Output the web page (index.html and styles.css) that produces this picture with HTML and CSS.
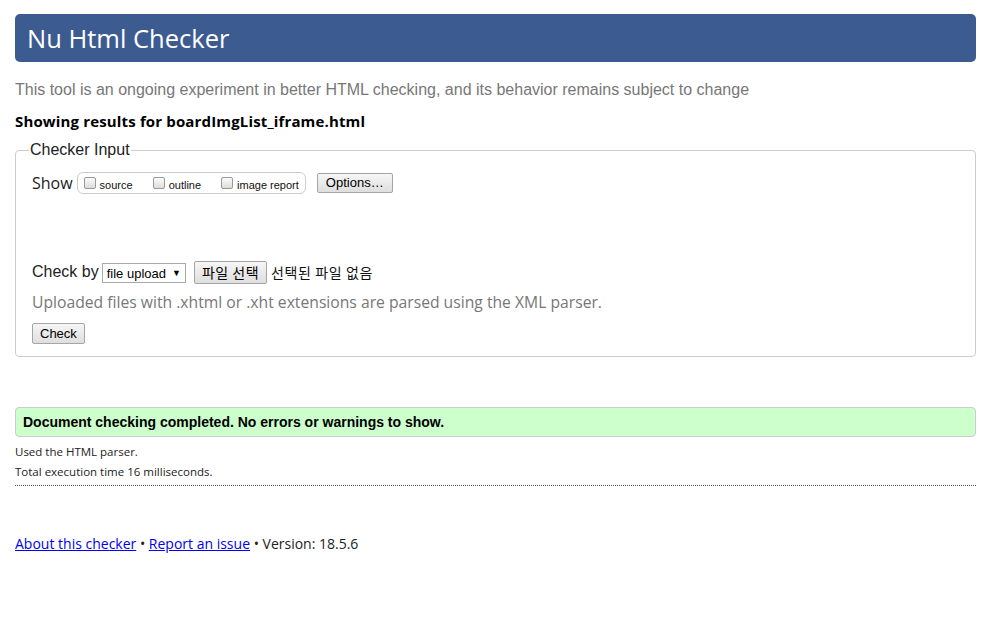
FILE: index.html
```html
<!DOCTYPE html>
<html lang="en">
<head>
<meta charset="utf-8">
<title>Nu Html Checker</title>
<link rel="stylesheet" href="styles.css">
</head>
<body>
<header class="banner"><h1 class="title">Nu Html Checker</h1></header>
<p class="tagline">This tool is an ongoing experiment in better HTML checking, and its behavior remains subject to change</p>
<p class="showing">Showing results for boardImgList_iframe.html</p>
<fieldset class="input">
  <legend class="legend">Checker Input</legend>
  <div class="row show-row">
    <span class="show-label">Show</span>
    <span class="show-group">
      <label class="opt"><input type="checkbox" class="cb"><span>source</span></label>
      <label class="opt"><input type="checkbox" class="cb"><span>outline</span></label>
      <label class="opt"><input type="checkbox" class="cb"><span>image report</span></label>
    </span>
    <button class="btn options">Options…</button>
  </div>
  <div class="row check-row">
    <span class="checkby">Check by</span>
    <span class="select">file upload <span class="arrow">▼</span></span>
    <button class="btn file">파일 선택</button>
    <span class="nofile">선택된 파일 없음</span>
  </div>
  <p class="info">Uploaded files with .xhtml or .xht extensions are parsed using the XML parser.</p>
  <button class="btn check">Check</button>
</fieldset>
<div class="success">Document checking completed. No errors or warnings to show.</div>
<p class="meta first">Used the HTML parser.</p>
<p class="meta">Total execution time 16 milliseconds.</p>
<hr class="rule">
<p class="footer"><a href="#">About this checker</a> • <a href="#">Report an issue</a> • Version: 18.5.6</p>
</body>
</html>
```
FILE: styles.css
```css
html, body { background: #fff; }
body {
  margin: 0;
  padding: 14px 13px 0 15px;
  font-family: "Liberation Sans", Arial, sans-serif;
  color: #000;
}
.banner {
  background: #3c5b91;
  border-radius: 5px;
  height: 48px;
  display: flex;
  align-items: center;
  padding-left: 12px;
}
.title {
  margin: 0;
  color: #fff;
  font-family: "Open Sans", "Noto Sans", sans-serif;
  font-weight: 400;
  font-size: 25.5px;
  letter-spacing: 0;
}
.tagline {
  margin: 17px 0 0;
  color: #777;
  font-size: 16px;
  line-height: 22px;
}
.showing {
  margin: 9px 0 0;
  font-family: "Open Sans", "Noto Sans", sans-serif;
  font-weight: 700;
  font-size: 15px;
  line-height: 22px;
  letter-spacing: 0.15px;
}
.input {
  margin: 9px 0 0;
  border: 1px solid #ccc;
  border-radius: 4px;
  padding: 13px 16px 12px;
  min-width: 0;
}
.legend {
  padding: 0 1px;
  margin-left: -3px;
  font-size: 16px;
  color: #222;
}
.row { display: flex; align-items: center; }
.show-row { height: 22px; }
.show-label {
  font-family: "Open Sans", "Noto Sans", sans-serif;
  font-size: 16px;
  color: #222;
  margin-right: 4px;
}
.show-group {
  display: inline-flex;
  align-items: center;
  border: 1px solid #ccc;
  border-radius: 6px;
  height: 20px;
  padding: 0 6px 0 6px;
  gap: 20px;
}
.opt {
  display: inline-flex;
  align-items: center;
  font-size: 11px;
  color: #111;
}
.opt span { margin-left: 4px; margin-top: 3px; }
.cb {
  appearance: none;
  -webkit-appearance: none;
  width: 12px;
  height: 12px;
  margin: 0;
  border: 1px solid #999;
  border-radius: 2px;
  background: linear-gradient(#fcfcfc, #dcdcdc);
}
.btn {
  font-family: "Liberation Sans", Arial, sans-serif;
  font-size: 13px;
  color: #000;
  background: linear-gradient(#f6f6f6, #dedede);
  border: 1px solid #a5a5a5;
  border-radius: 2px;
  padding: 0 8px;
  height: 20px;
  line-height: 18px;
}
.options { margin-left: 11px; font-size: 13px; }
.check-row { margin-top: 66px; height: 24px; }
.checkby { font-size: 16px; color: #222; margin-right: 3px; }
.select {
  display: inline-flex;
  align-items: center;
  height: 18px;
  border: 1px solid #a9a9a9;
  padding: 0 4px;
  font-size: 13px;
  color: #000;
  margin-top: 2px;
}
.arrow { font-size: 9px; margin-left: 6px; }
.file {
  margin-left: 8px;
  height: 23px;
  font-family: "Noto Sans CJK KR", sans-serif;
  font-size: 14px;
  letter-spacing: 0.5px;
  padding: 0 7px;
}
.nofile {
  margin-left: 4px;
  font-family: "Noto Sans CJK KR", sans-serif;
  font-size: 14px;
  letter-spacing: 0.6px;
  color: #111;
}
.info {
  margin: 6px 0 0;
  color: #777;
  font-family: "Open Sans", "Noto Sans", sans-serif;
  font-size: 15.7px;
  line-height: 24px;
}
.check { margin-top: 9px; height: 21px; padding: 0 7px; font-size: 13px; }
.success {
  margin-top: 50px;
  background: #ccffcc;
  border: 1px solid #ccc;
  border-radius: 4px;
  height: 28px;
  line-height: 28px;
  padding-left: 7px;
  font-weight: 700;
  font-size: 14px;
}
.meta {
  margin: 0;
  font-family: "Open Sans", "Noto Sans", sans-serif;
  font-size: 11.5px;
  line-height: 20px;
  color: #222;
}
.meta.first { margin-top: 5px; }
.rule {
  margin: 3px 0 0;
  border: 0;
  border-top: 1px dotted #555;
  height: 0;
}
.footer {
  margin: 48px 0 0;
  font-family: "Open Sans", "Noto Sans", sans-serif;
  font-size: 14px;
  color: #222;
}
.footer a { color: #0000ee; }
```
